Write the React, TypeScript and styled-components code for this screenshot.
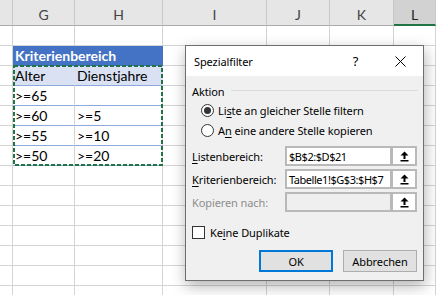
import React from 'react';
import styled, { createGlobalStyle } from 'styled-components';

const GlobalStyle = createGlobalStyle`
  html, body { margin: 0; padding: 0; background: #fff; }
  body { width: 436px; height: 295px; overflow: hidden; }
  * { box-sizing: border-box; }
`;

const Sheet = styled.div`
  position: relative;
  width: 436px;
  height: 295px;
  overflow: hidden;
  background: #fff;
  font-family: Lato, "Liberation Sans", sans-serif;
`;

const Grid = styled.div`
  display: grid;
  grid-template-columns: 13px 62px 88px 104px 63px 64px 42px;
  grid-template-rows: 26px repeat(14, 20px);
`;

const ColHead = styled.div<{ $selected?: boolean }>`
  background: ${(p) => (p.$selected ? '#d2d2d2' : '#e6e6e6')};
  border-right: 1px solid #c8c8c8;
  border-bottom: ${(p) => (p.$selected ? '2px solid #217346' : '1px solid #ababab')};
  display: flex;
  align-items: center;
  justify-content: center;
  padding-top: 4px;
  font-size: 14px;
  color: ${(p) => (p.$selected ? '#222' : '#444')};
`;

type Tone = 'plain' | 'title' | 'head' | 'data';

const toneBg: Record<Tone, string> = {
  plain: 'transparent',
  title: '#4472c4',
  head: '#d9e1f2',
  data: 'transparent',
};

const Cell = styled.div<{ $tone: Tone; $span?: number }>`
  grid-column: span ${(p) => p.$span ?? 1};
  background: ${(p) => toneBg[p.$tone]};
  border-right: 1px solid
    ${(p) => (p.$tone === 'title' || p.$tone === 'head' ? toneBg[p.$tone] : '#d4d4d4')};
  border-bottom: 1px solid
    ${(p) =>
      p.$tone === 'title' ? '#4472c4' : p.$tone === 'head' || p.$tone === 'data' ? '#8ea9db' : '#d4d4d4'};
  display: flex;
  align-items: center;
  padding-left: 2px;
  font-size: 14px;
  font-weight: ${(p) => (p.$tone === 'title' ? 700 : 400)};
  color: ${(p) => (p.$tone === 'title' ? '#fff' : '#000')};
  white-space: nowrap;
`;

const Marquee = styled.svg`
  position: absolute;
  left: 13px;
  top: 65px;
  width: 150px;
  height: 101px;
  pointer-events: none;
`;

/* Dialog */
const Dialog = styled.div`
  position: absolute;
  left: 185px;
  top: 45px;
  width: 239px;
  height: 236px;
  border: 1px solid #6e6e6e;
  background: #f0f0f0;
  box-shadow: 1px 5px 14px rgba(0, 0, 0, 0.3);
  font-family: "Noto Sans", "Open Sans", sans-serif;
  font-size: 11px;
  letter-spacing: -0.1px;
  color: #000;
  display: flex;
  flex-direction: column;
`;

const TitleBar = styled.div`
  height: 30px;
  background: #fff;
  display: flex;
  align-items: center;
  padding-left: 8px;
`;

const Title = styled.div`
  flex: 1;
  font-size: 11px;
`;

const TitleButton = styled.div`
  width: 45px;
  height: 30px;
  display: flex;
  align-items: center;
  justify-content: center;
  font-size: 13px;
`;

const Body = styled.div`
  flex: 1;
  display: flex;
  flex-direction: column;
  padding: 0 5px 0 6px;
`;

const Legend = styled.div`
  display: flex;
  align-items: center;
  height: 14px;
  margin-top: 8px;
`;

const LegendLine = styled.div`
  flex: 1;
  height: 1px;
  background: #dcdcdc;
  margin-left: 6px;
  margin-top: -2px;
`;

const Options = styled.div`
  display: flex;
  flex-direction: column;
  margin-top: 3px;
  padding-left: 9px;
`;

const OptionRow = styled.div`
  display: flex;
  align-items: center;
  height: 19.5px;
  gap: 4px;
`;

const Radio = styled.div<{ $checked?: boolean }>`
  width: 13px;
  height: 13px;
  border-radius: 50%;
  border: 1px solid #333;
  background: #fff;
  display: flex;
  align-items: center;
  justify-content: center;
  &::after {
    content: '';
    display: ${(p) => (p.$checked ? 'block' : 'none')};
    width: 7px;
    height: 7px;
    border-radius: 50%;
    background: #333;
  }
`;

const Key = styled.u`
  text-decoration-thickness: 1px;
  text-underline-offset: 2px;
`;

const Fields = styled.div`
  display: flex;
  flex-direction: column;
  gap: 3px;
  margin-top: 6px;
`;

const FieldRow = styled.div`
  display: flex;
  align-items: center;
  height: 20px;
`;

const FieldLabel = styled.div<{ $disabled?: boolean }>`
  width: 93px;
  color: ${(p) => (p.$disabled ? '#8d8d8d' : '#000')};
`;

const RefBox = styled.div`
  display: flex;
  gap: 3px;
  padding: 2px;
  background: #b9b9b9;
  height: 20px;
  width: 132px;
`;

const RefInput = styled.div<{ $disabled?: boolean }>`
  flex: 1;
  background: ${(p) => (p.$disabled ? '#efefef' : '#fff')};
  padding-left: 2px;
  display: flex;
  align-items: center;
  white-space: nowrap;
  overflow: hidden;
  letter-spacing: -0.45px;
`;

const RefButton = styled.div`
  width: 22px;
  background: #fff;
  display: flex;
  align-items: center;
  justify-content: center;
`;

const CheckRow = styled.div`
  display: flex;
  align-items: center;
  gap: 5px;
  margin-top: 14px;
  height: 13px;
`;

const CheckBox = styled.div`
  width: 13px;
  height: 13px;
  border: 1px solid #333;
  background: #fff;
`;

const Buttons = styled.div`
  display: flex;
  justify-content: flex-end;
  gap: 10px;
  margin-top: 11px;
  margin-right: 1px;
`;

const Button = styled.div<{ $primary?: boolean }>`
  width: 74px;
  height: 22px;
  background: #e1e1e1;
  border: ${(p) => (p.$primary ? '2px solid #0078d7' : '1px solid #adadad')};
  display: flex;
  align-items: center;
  justify-content: center;
`;

const UploadIcon = () => (
  <svg width="9" height="11" viewBox="0 0 9 11">
    <path d="M4.5 0.5 L8.5 4.5 H0.5 Z" fill="#000" />
    <rect x="3.5" y="4" width="2" height="4" fill="#000" />
    <rect x="0.5" y="9" width="8" height="1.5" fill="#000" />
  </svg>
);

const CloseIcon = () => (
  <svg width="11" height="11" viewBox="0 0 11 11">
    <path d="M0.5 0.5 L10.5 10.5 M10.5 0.5 L0.5 10.5" stroke="#000" strokeWidth="1" />
  </svg>
);

const columns = ['', 'G', 'H', 'I', 'J', 'K', 'L'];

type RowDef = { g?: string; h?: string; tone: Tone; title?: string };

const rows: RowDef[] = [
  { tone: 'plain' },
  { tone: 'title', title: 'Kriterienbereich' },
  { tone: 'head', g: 'Alter', h: 'Dienstjahre' },
  { tone: 'data', g: '>=65', h: '' },
  { tone: 'data', g: '>=60', h: '>=5' },
  { tone: 'data', g: '>=55', h: '>=10' },
  { tone: 'data', g: '>=50', h: '>=20' },
  ...Array.from({ length: 7 }, () => ({ tone: 'plain' as Tone })),
];

export default function App() {
  return (
    <>
      <GlobalStyle />
      <Sheet>
        <Grid>
          {columns.map((c) => (
            <ColHead key={'h' + c} $selected={c === 'L'}>
              {c}
            </ColHead>
          ))}
          {rows.map((r, i) => (
            <React.Fragment key={i}>
              <Cell $tone="plain" />
              {r.tone === 'title' ? (
                <Cell $tone="title" $span={2}>
                  {r.title}
                </Cell>
              ) : (
                <>
                  <Cell $tone={r.tone}>{r.g}</Cell>
                  <Cell $tone={r.tone}>{r.h}</Cell>
                </>
              )}
              <Cell $tone="plain" />
              <Cell $tone="plain" />
              <Cell $tone="plain" />
              <Cell $tone="plain" />
            </React.Fragment>
          ))}
        </Grid>
        <Marquee viewBox="0 0 150 101">
          <rect
            x="1"
            y="1"
            width="148"
            height="99"
            fill="none"
            stroke="#217346"
            strokeWidth="2"
            strokeDasharray="4 2"
          />
        </Marquee>

        <Dialog>
          <TitleBar>
            <Title>Spezialfilter</Title>
            <TitleButton>?</TitleButton>
            <TitleButton>
              <CloseIcon />
            </TitleButton>
          </TitleBar>
          <Body>
            <Legend>
              Aktion
              <LegendLine />
            </Legend>
            <Options>
              <OptionRow>
                <Radio $checked />
                <span>
                  Li<Key>s</Key>te an gleicher Stelle filtern
                </span>
              </OptionRow>
              <OptionRow>
                <Radio />
                <span>
                  A<Key>n</Key> eine andere Stelle kopieren
                </span>
              </OptionRow>
            </Options>
            <Fields>
              <FieldRow>
                <FieldLabel>
                  <Key>L</Key>istenbereich:
                </FieldLabel>
                <RefBox>
                  <RefInput>$B$2:$D$21</RefInput>
                  <RefButton>
                    <UploadIcon />
                  </RefButton>
                </RefBox>
              </FieldRow>
              <FieldRow>
                <FieldLabel>
                  <Key>K</Key>riterienbereich:
                </FieldLabel>
                <RefBox>
                  <RefInput>Tabelle1!$G$3:$H$7</RefInput>
                  <RefButton>
                    <UploadIcon />
                  </RefButton>
                </RefBox>
              </FieldRow>
              <FieldRow>
                <FieldLabel $disabled>Kopieren nach:</FieldLabel>
                <RefBox>
                  <RefInput $disabled />
                  <RefButton>
                    <UploadIcon />
                  </RefButton>
                </RefBox>
              </FieldRow>
            </Fields>
            <CheckRow>
              <CheckBox />
              <span>
                Ke<Key>i</Key>ne Duplikate
              </span>
            </CheckRow>
            <Buttons>
              <Button $primary>OK</Button>
              <Button>Abbrechen</Button>
            </Buttons>
          </Body>
        </Dialog>
      </Sheet>
    </>
  );
}
